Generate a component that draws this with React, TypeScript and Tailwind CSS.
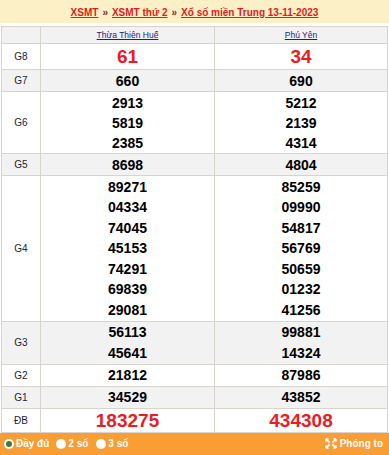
import React from "react";

type Row = { label: string; a: string[]; b: string[]; gray: boolean; big?: boolean; lh?: string };

const rows: Row[] = [
  { label: "G8", a: ["61"], b: ["34"], gray: false, big: true },
  { label: "G7", a: ["660"], b: ["690"], gray: true },
  { label: "G6", a: ["2913", "5819", "2385"], b: ["5212", "2139", "4314"], gray: false },
  { label: "G5", a: ["8698"], b: ["4804"], gray: true },
  {
    label: "G4",
    a: ["89271", "04334", "74045", "45153", "74291", "69839", "29081"],
    b: ["85259", "09990", "54817", "56769", "50659", "01232", "41256"],
    gray: false,
    lh: "g4",
  },
  { label: "G3", a: ["56113", "45641"], b: ["99881", "14324"], gray: true, lh: "g3" },
  { label: "G2", a: ["21812"], b: ["87986"], gray: false },
  { label: "G1", a: ["34529"], b: ["43852"], gray: true },
  { label: "ĐB", a: ["183275"], b: ["434308"], gray: false, big: true },
];

function Cell({ nums, big, lh, last }: { nums: string[]; big?: boolean; lh?: string; last?: boolean }) {
  const line =
    lh === "g4" ? "leading-[20.5px]" : lh === "g3" ? "leading-[20.5px]" : "leading-[20px]";
  return (
    <div
      className={`flex flex-col items-center justify-center py-[0.5px] ${last ? "" : "border-r border-[#d8d3cc]"}`}
    >
      {nums.map((n) =>
        big ? (
          <div key={n} className="text-[19px] font-bold leading-[23px] text-[#ec1c24]">
            {n}
          </div>
        ) : (
          <div key={n} className={`text-[14px] font-bold text-black ${line}`}>
            {n}
          </div>
        )
      )}
    </div>
  );
}

export default function App() {
  return (
    <div
      className="w-[389px] h-[455px] bg-white overflow-hidden flex flex-col"
      style={{ fontFamily: '"Liberation Sans", Arial, sans-serif' }}
    >
      <div className="h-[23px] bg-[#fcf1c6] flex items-center justify-center text-[10px] font-bold pt-[2px]">
        <span className="text-[#e01b1b] underline">XSMT</span>
        <span className="text-[#8b2a10] mx-[4px] text-[10px]">»</span>
        <span className="text-[#e01b1b] underline">XSMT thứ 2</span>
        <span className="text-[#8b2a10] mx-[4px] text-[10px]">»</span>
        <span className="text-[#e01b1b] underline">Xổ số miền Trung 13-11-2023</span>
      </div>
      <div className="h-[3px]" />
      <div className="ml-[1px] w-[387px] border-l border-t border-[#d8d3cc]">
        <div className="grid grid-cols-[39px_174px_173px] bg-[#f2f2f2] border-b border-[#d8d3cc] h-[17px]">
          <div className="border-r border-[#d8d3cc]" />
          <div className="border-r border-[#d8d3cc] flex items-center justify-center">
            <span className="text-[8.5px] text-[#1d1d8a] underline leading-[12px]">Thừa Thiên Huế</span>
          </div>
          <div className="border-r border-[#d8d3cc] flex items-center justify-center">
            <span className="text-[8.5px] text-[#1d1d8a] underline leading-[12px]">Phú Yên</span>
          </div>
        </div>
        {rows.map((r) => (
          <div
            key={r.label}
            className={`grid grid-cols-[39px_174px_173px] border-b border-[#d8d3cc] ${r.gray ? "bg-[#f2f2f2]" : "bg-white"} ${r.label === "G8" ? "h-[26px]" : ""} ${r.label === "ĐB" ? "h-[24px]" : ""}`}
          >
            <div className="border-r border-[#d8d3cc] flex items-center justify-center text-[10px] text-[#222238]">
              {r.label}
            </div>
            <Cell nums={r.a} big={r.big} lh={r.lh} />
            <div className="border-r border-[#d8d3cc] flex">
              <div className="flex-1">
                <Cell nums={r.b} big={r.big} lh={r.lh} last />
              </div>
            </div>
          </div>
        ))}
      </div>
      <div className="flex-1 bg-[#f99d34] flex items-center justify-between px-[4px] text-white font-bold text-[10px]">
        <div className="flex items-center">
          <span className="w-[10px] h-[10px] rounded-full bg-white flex items-center justify-center">
            <span className="w-[6px] h-[6px] rounded-full bg-[#3a7a3a]" />
          </span>
          <span className="ml-[2px]">Đầy đủ</span>
          <span className="ml-[7px] w-[10px] h-[10px] rounded-full bg-white" />
          <span className="ml-[2px]">2 số</span>
          <span className="ml-[8px] w-[10px] h-[10px] rounded-full bg-white" />
          <span className="ml-[2px]">3 số</span>
        </div>
        <div className="flex items-center mr-[2px]">
          <svg width="12" height="11" viewBox="0 0 13 12" fill="none" stroke="white" strokeWidth="2">
            <path d="M1 1 L5 5 M12 1 L8 5 M1 11 L5 7 M12 11 L8 7" />
            <path d="M1 1 h3 M1 1 v3 M12 1 h-3 M12 1 v3 M1 11 h3 M1 11 v-3 M12 11 h-3 M12 11 v-3" strokeWidth="1.5" />
          </svg>
          <span className="ml-[3px]">Phóng to</span>
        </div>
      </div>
    </div>
  );
}
